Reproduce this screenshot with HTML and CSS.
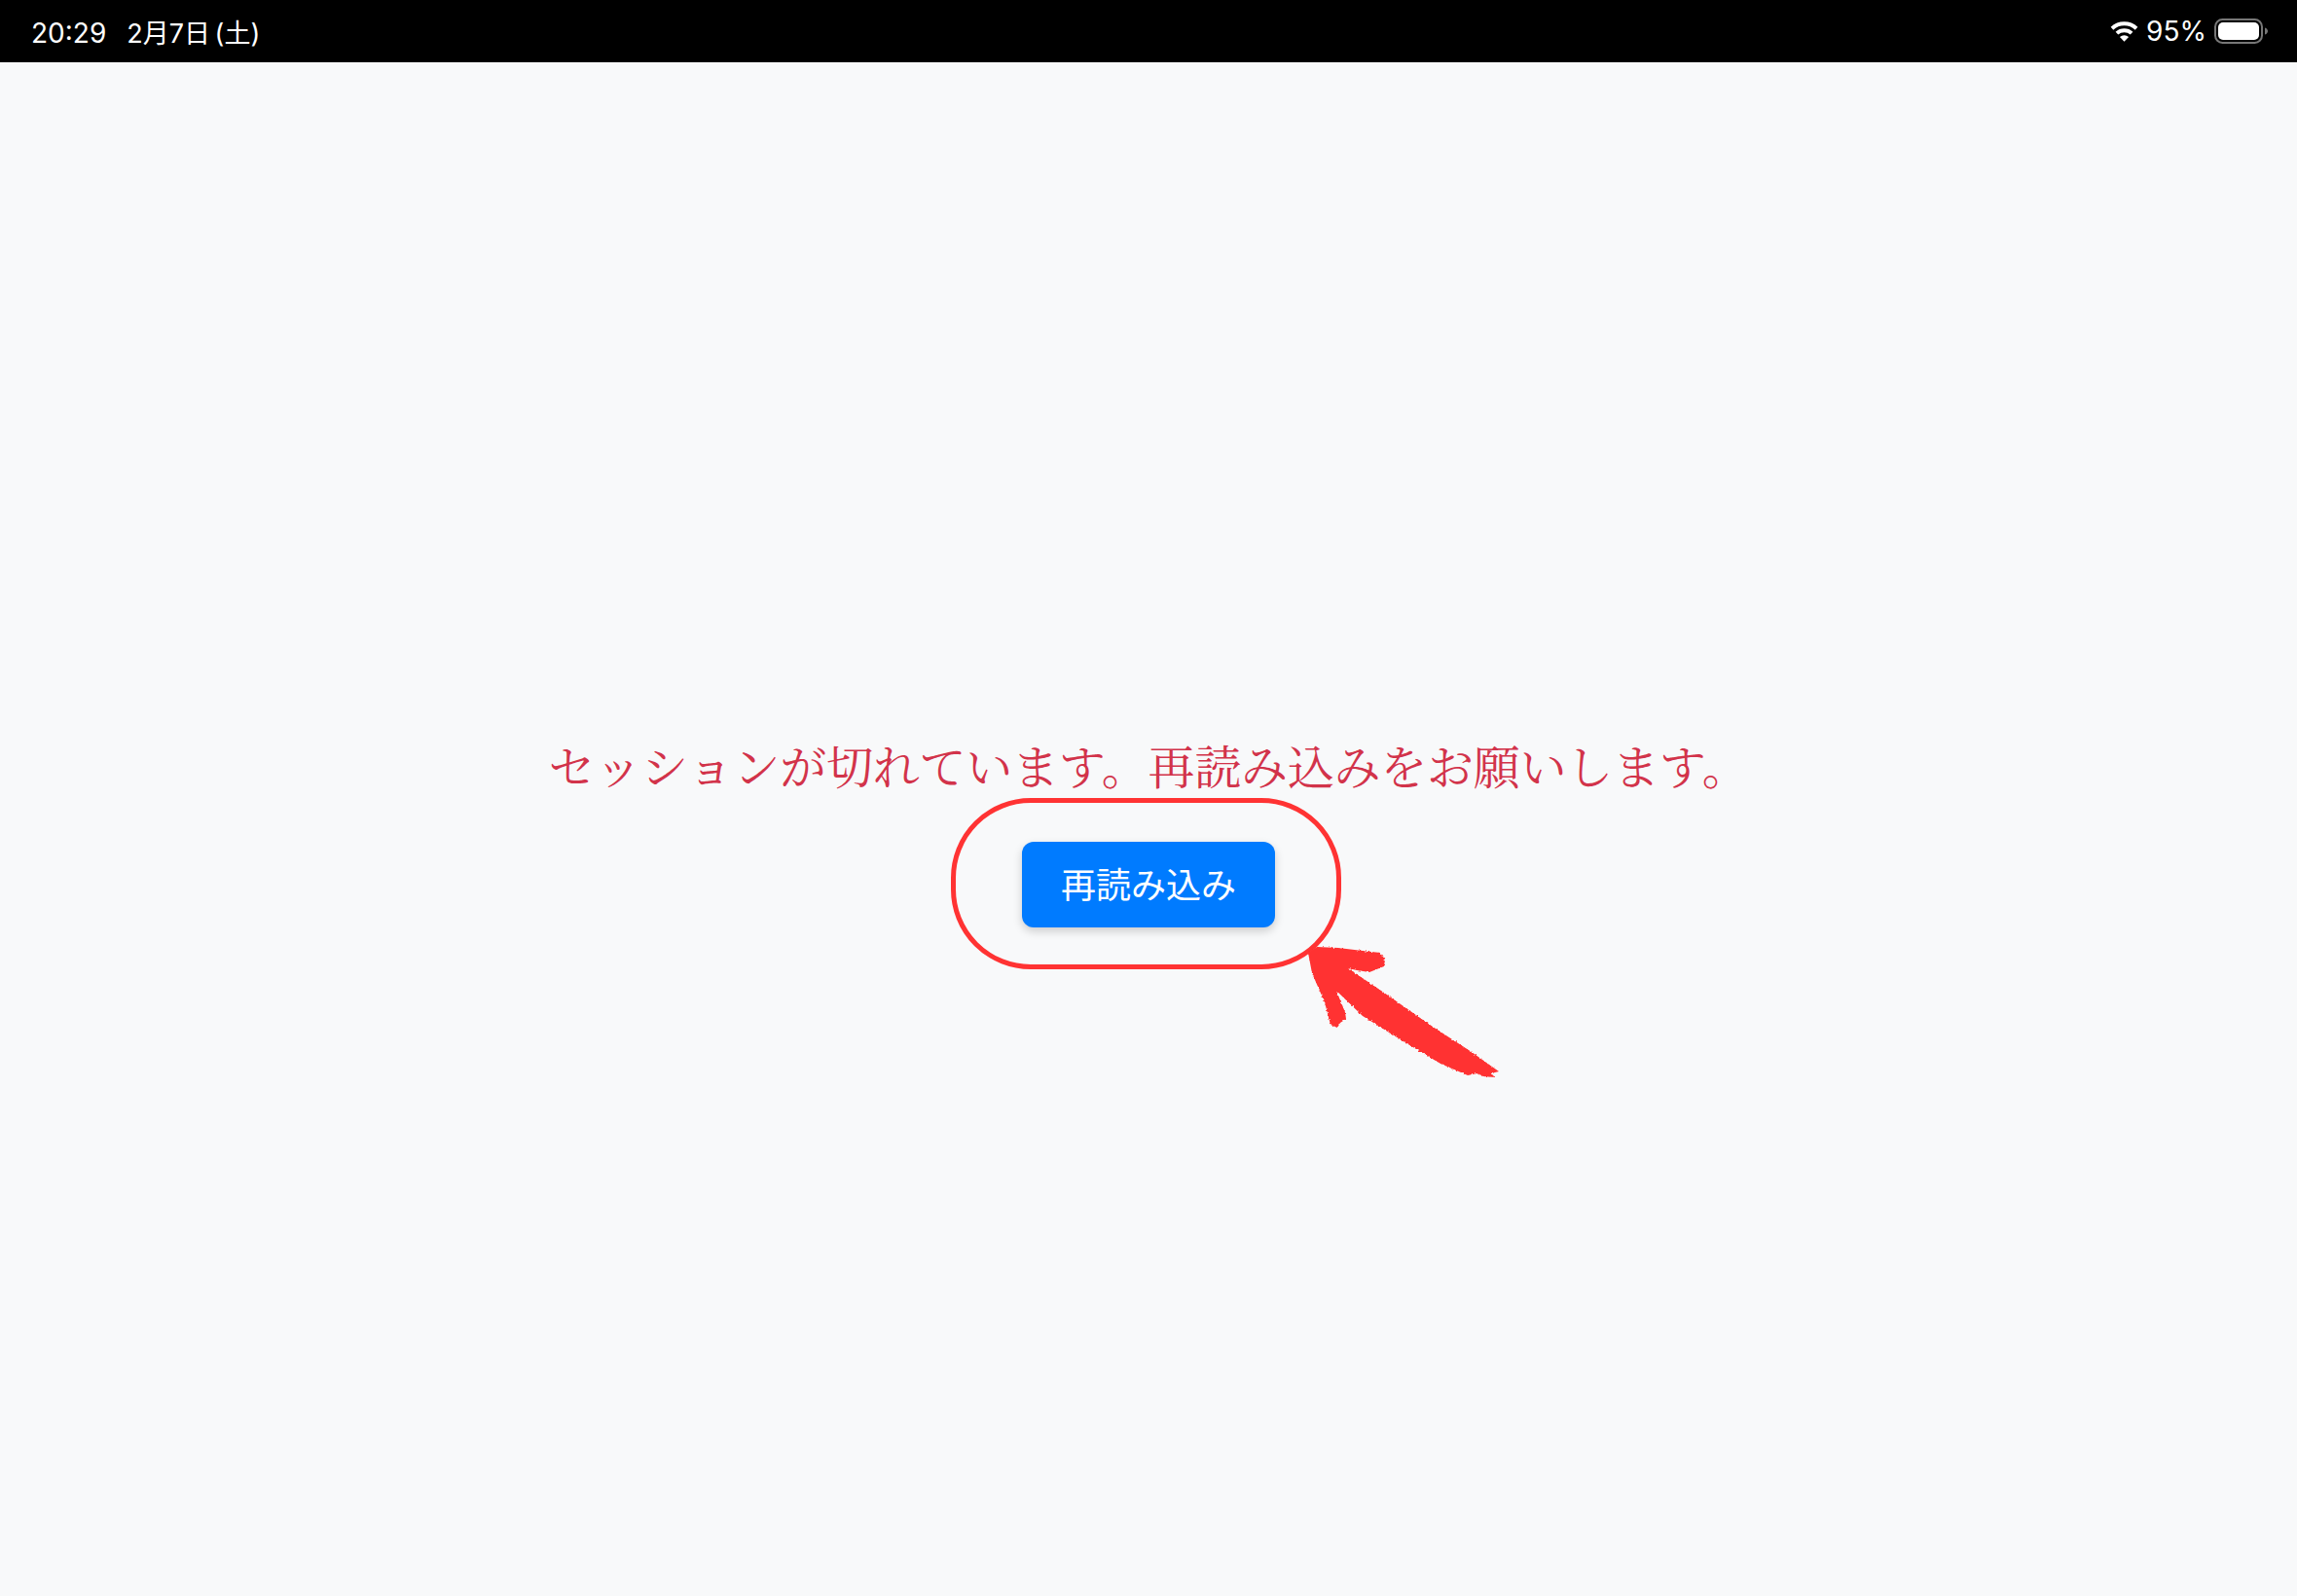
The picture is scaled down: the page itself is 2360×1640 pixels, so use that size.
FILE: index.html
```html
<!DOCTYPE html>
<html lang="ja">
<head>
<meta charset="utf-8">
<title>セッション切れ</title>
<link rel="stylesheet" href="styles.css">
</head>
<body>
<header class="status">
  <div class="status-left"><span class="time">20:29</span><span class="date">2月7日 (土)</span></div>
  <div class="status-right">
    <svg class="wifi" viewBox="0 0 28 20" aria-hidden="true">
      <path d="M14 20 9.600 15.200a6.800 6.800 0 0 1 8.800 0Z" fill="#fff"/>
      <path d="M6.700 11.600a10.800 10.800 0 0 1 14.600 0M1.900 6.800a17.800 17.800 0 0 1 24.200 0" fill="none" stroke="#fff" stroke-width="3.800"/>
    </svg>
    <span class="pct">95%</span>
    <svg class="battery" viewBox="0 0 55 26" aria-hidden="true">
      <rect x="1" y="1" width="48" height="24" rx="7.500" fill="none" stroke="#777" stroke-width="2"/>
      <rect x="4" y="4" width="42" height="18" rx="5" fill="#fff"/>
      <path d="M52 9.500c2 .6 3 2 3 3.500s-1 2.900-3 3.500Z" fill="#777"/>
    </svg>
  </div>
</header>
<main class="page">
  <p class="message">セッションが切れています。再読み込みをお願いします。</p>
  <button class="reload" type="button">再読み込み</button>
</main>
<div class="oval"></div>
<svg class="arrow" viewBox="0 0 240 170" aria-hidden="true">
  <defs>
    <filter id="rough" x="-5%" y="-5%" width="110%" height="110%">
      <feTurbulence type="fractalNoise" baseFrequency="0.5" numOctaves="2" seed="4"/>
      <feDisplacementMap in="SourceGraphic" scale="3" xChannelSelector="R" yChannelSelector="G"/>
    </filter>
  </defs>
  <path filter="url(#rough)" fill="#ff3333" d="M24 29 33 23 55 24 80 27 98 29 103 36 102 43 87 49 74 47 65 45 102 70 152 105 192 131 220 151 212 153 216 157 204 156 198 153 188 155 160 143 120 119 80 94 53 68 62 90 63 97 57 101 54 106 47 103 41 80 28 50Z"/>
</svg>
</body>
</html>
```
FILE: styles.css
```css
* { box-sizing: border-box; }
html, body { margin: 0; height: 100%; }
body {
  position: relative;
  display: flex;
  flex-direction: column;
  height: 1640px;
  overflow: hidden;
  background: #f8f9fa;
  font-family: "Noto Sans CJK JP", sans-serif;
}
.status {
  display: flex;
  flex: 0 0 64px;
  align-items: center;
  justify-content: space-between;
  padding: 0 30px 0 32px;
  background: #000;
  color: #fff;
  font-family: Inter, "Noto Sans CJK JP", sans-serif;
  font-size: 28px;
}
.status-left { display: flex; align-items: baseline; gap: 21px; }
.date { font-size: 27px; word-spacing: -3px; }
.status-right { display: flex; align-items: center; }
.wifi { width: 29px; height: 21px; margin-right: 8px; }
.pct { margin-right: 8px; }
.battery { width: 55px; height: 26px; }
.page {
  flex: 1;
  display: flex;
  flex-direction: column;
  align-items: center;
  justify-content: center;
}
.message {
  margin: 0 0 44px;
  color: #d2334a;
  font-family: "Noto Serif CJK JP", "Liberation Serif", "Noto Sans CJK JP", serif;
  font-size: 48px;
  font-weight: 400;
  letter-spacing: -0.25px;
  line-height: 70px;
}
.reload {
  width: 260px;
  height: 88px;
  padding: 0 0 4px;
  border: 0;
  border-radius: 12px;
  background: #007bff;
  color: #fff;
  font-family: "Noto Sans CJK JP", sans-serif;
  font-size: 36px;
  font-weight: 400;
  box-shadow: 0 4px 10px rgba(0, 0, 0, .18);
}
.oval {
  position: absolute;
  left: 977px;
  top: 820px;
  width: 401px;
  height: 176px;
  border: 5px solid #ff3333;
  border-radius: 82px;
}
.arrow {
  position: absolute;
  left: 1320px;
  top: 950px;
  width: 240px;
  height: 170px;
}
```
